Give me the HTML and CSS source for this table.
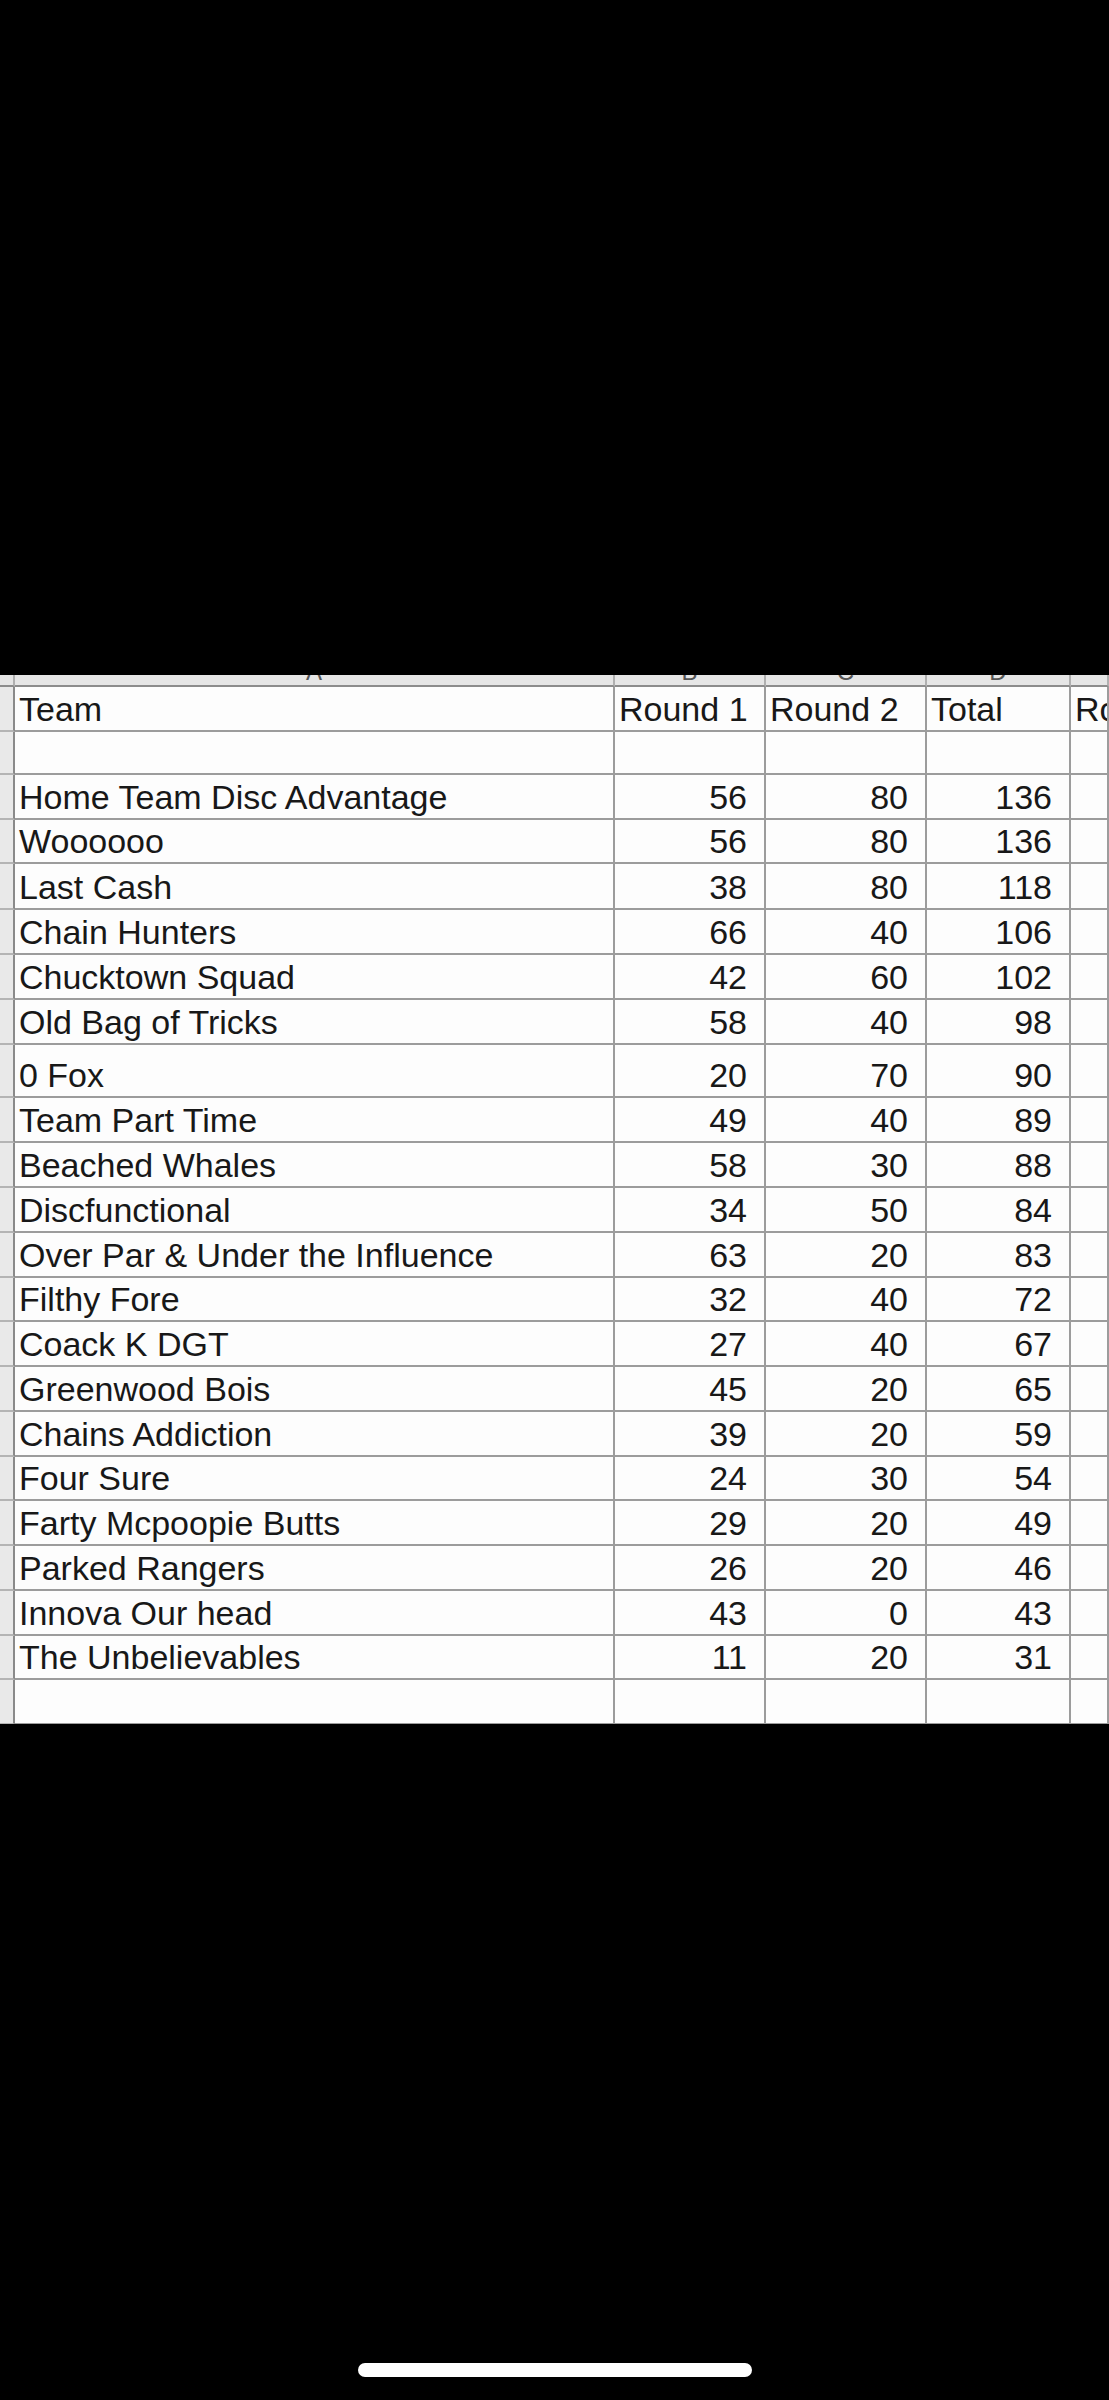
FILE: index.html
```html
<!DOCTYPE html>
<html lang="en">
<head>
<meta charset="utf-8">
<title>Team Standings</title>
<link rel="stylesheet" href="styles.css">
</head>
<body>
<div class="screen">
  <div class="sheet">
    <div class="strip rh"></div>
    <div class="strip"><span class="col-letter">A</span></div>
    <div class="strip"><span class="col-letter">B</span></div>
    <div class="strip"><span class="col-letter">C</span></div>
    <div class="strip"><span class="col-letter">D</span></div>
    <div class="strip"></div>

    <div class="rh"></div><div class="c">Team</div><div class="c">Round 1</div><div class="c">Round 2</div><div class="c">Total</div><div class="c">Ro</div>
    <div class="rh"></div><div class="c"></div><div class="c"></div><div class="c"></div><div class="c"></div><div class="c"></div>

    <div class="rh"></div><div class="c">Home Team Disc Advantage</div><div class="c num">56</div><div class="c num">80</div><div class="c num">136</div><div class="c"></div>
    <div class="rh"></div><div class="c">Woooooo</div><div class="c num">56</div><div class="c num">80</div><div class="c num">136</div><div class="c"></div>
    <div class="rh"></div><div class="c">Last Cash</div><div class="c num">38</div><div class="c num">80</div><div class="c num">118</div><div class="c"></div>
    <div class="rh"></div><div class="c">Chain Hunters</div><div class="c num">66</div><div class="c num">40</div><div class="c num">106</div><div class="c"></div>
    <div class="rh"></div><div class="c">Chucktown Squad</div><div class="c num">42</div><div class="c num">60</div><div class="c num">102</div><div class="c"></div>
    <div class="rh"></div><div class="c">Old Bag of Tricks</div><div class="c num">58</div><div class="c num">40</div><div class="c num">98</div><div class="c"></div>
    <div class="rh"></div><div class="c">0 Fox</div><div class="c num">20</div><div class="c num">70</div><div class="c num">90</div><div class="c"></div>
    <div class="rh"></div><div class="c">Team Part Time</div><div class="c num">49</div><div class="c num">40</div><div class="c num">89</div><div class="c"></div>
    <div class="rh"></div><div class="c">Beached Whales</div><div class="c num">58</div><div class="c num">30</div><div class="c num">88</div><div class="c"></div>
    <div class="rh"></div><div class="c">Discfunctional</div><div class="c num">34</div><div class="c num">50</div><div class="c num">84</div><div class="c"></div>
    <div class="rh"></div><div class="c">Over Par &amp; Under the Influence</div><div class="c num">63</div><div class="c num">20</div><div class="c num">83</div><div class="c"></div>
    <div class="rh"></div><div class="c">Filthy Fore</div><div class="c num">32</div><div class="c num">40</div><div class="c num">72</div><div class="c"></div>
    <div class="rh"></div><div class="c">Coack K DGT</div><div class="c num">27</div><div class="c num">40</div><div class="c num">67</div><div class="c"></div>
    <div class="rh"></div><div class="c">Greenwood Bois</div><div class="c num">45</div><div class="c num">20</div><div class="c num">65</div><div class="c"></div>
    <div class="rh"></div><div class="c">Chains Addiction</div><div class="c num">39</div><div class="c num">20</div><div class="c num">59</div><div class="c"></div>
    <div class="rh"></div><div class="c">Four Sure</div><div class="c num">24</div><div class="c num">30</div><div class="c num">54</div><div class="c"></div>
    <div class="rh"></div><div class="c">Farty Mcpoopie Butts</div><div class="c num">29</div><div class="c num">20</div><div class="c num">49</div><div class="c"></div>
    <div class="rh"></div><div class="c">Parked Rangers</div><div class="c num">26</div><div class="c num">20</div><div class="c num">46</div><div class="c"></div>
    <div class="rh"></div><div class="c">Innova Our head</div><div class="c num">43</div><div class="c num">0</div><div class="c num">43</div><div class="c"></div>
    <div class="rh"></div><div class="c">The Unbelievables</div><div class="c num">11</div><div class="c num">20</div><div class="c num">31</div><div class="c"></div>

    <div class="rh"></div><div class="c"></div><div class="c"></div><div class="c"></div><div class="c"></div><div class="c"></div>
  </div>
  <div class="home-bar"></div>
</div>
</body>
</html>
```

FILE: styles.css
```css
html, body {
  margin: 0;
  padding: 0;
  background: #000;
}

.screen {
  width: 1109px;
  height: 2400px;
  overflow: hidden;
  background: #000;
  padding-top: 675px;
  box-sizing: border-box;
}

.sheet {
  height: 1049px;
  overflow: hidden;
  background: #fdfdfd;
  display: grid;
  grid-template-columns: 15px 600px 151px 161px 144px 1fr;
  grid-template-rows: 12px 45px 43px 45px 44px 46px 45px 45px 45px 53px 45px 45px 45px 45px 44px 45px 45px 45px 44px 45px 45px 45px 44px 45px;
  font-family: "Liberation Sans", Arial, sans-serif;
  font-size: 34px;
  color: #181818;
}

.c, .rh, .strip {
  box-sizing: border-box;
  border-right: 2px solid #9c9c9c;
  border-bottom: 2px solid #9c9c9c;
  min-width: 0;
  overflow: hidden;
  white-space: nowrap;
}

.c {
  display: flex;
  align-items: flex-end;
  line-height: 33px;
  padding: 0 4px 4px 4px;
}

.num {
  justify-content: flex-end;
  padding-right: 17px;
}

.rh {
  background: #e9e9e9;
  border-bottom-color: #b4b4b4;
  border-right-color: #8a8a8a;
}

.strip {
  background: #e6e6e6;
  border-bottom-color: #8c8c8c;
  border-right-color: #b0b0b0;
  display: flex;
  justify-content: center;
}

.col-letter {
  display: block;
  font-size: 24px;
  line-height: 26px;
  margin-top: -16px;
  color: #555;
}

.home-bar {
  width: 394px;
  height: 14px;
  border-radius: 7px;
  background: #fff;
  margin: 639px auto 0;
}
```
